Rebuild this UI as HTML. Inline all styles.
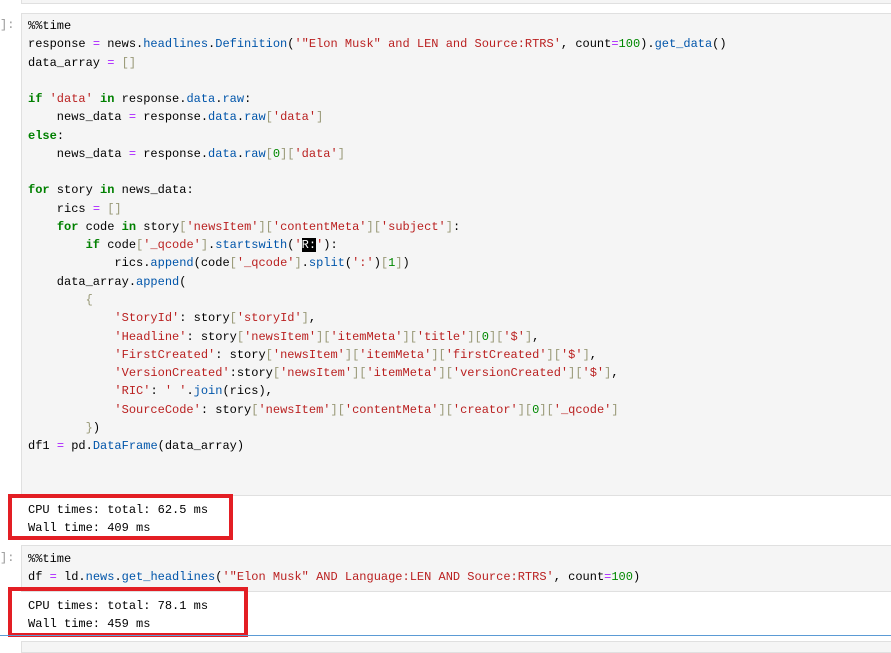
<!DOCTYPE html>
<html><head><meta charset="utf-8"><style>
body{margin:0;width:891px;height:647px;background:#fff;position:relative;overflow:hidden;font-family:"Liberation Mono",monospace;font-size:12px;color:#000}
.box{position:absolute;left:21px;right:-2px;background:#f5f5f5;border:1px solid #e0e0e0;box-sizing:border-box}
pre{margin:0;position:absolute;left:28px;font-family:"Liberation Mono",monospace;font-size:12px;line-height:18.26px;white-space:pre}
.k{color:#008000;font-weight:bold}.s{color:#ba2121}.o{color:#aa22ff}.p{color:#0055aa}.b{color:#999977}.n{color:#008800}
.sel{background:#000;color:#fff}
.pr{position:absolute;left:0;color:#999;font-size:12px}
.red{position:absolute;border:4px solid #e31e24;box-sizing:border-box}
</style></head><body>
<div class="box" style="top:-2px;height:6px"></div>
<div class="box" style="top:13px;height:483px"></div>
<div class="pr" style="top:18px">]:</div>
<pre style="top:17px">%%time
response <span class="o">=</span> news.<span class="p">headlines</span>.<span class="p">Definition</span>(<span class="s">'"Elon Musk" and LEN and Source:RTRS'</span>, count<span class="o">=</span><span class="n">100</span>).<span class="p">get_data</span>()
data_array <span class="o">=</span> <span class="b">[]</span>

<span class="k">if</span> <span class="s">'data'</span> <span class="k">in</span> response.<span class="p">data</span>.<span class="p">raw</span>:
    news_data <span class="o">=</span> response.<span class="p">data</span>.<span class="p">raw</span><span class="b">[</span><span class="s">'data'</span><span class="b">]</span>
<span class="k">else</span>:
    news_data <span class="o">=</span> response.<span class="p">data</span>.<span class="p">raw</span><span class="b">[</span><span class="n">0</span><span class="b">][</span><span class="s">'data'</span><span class="b">]</span>

<span class="k">for</span> story <span class="k">in</span> news_data:
    rics <span class="o">=</span> <span class="b">[]</span>
    <span class="k">for</span> code <span class="k">in</span> story<span class="b">[</span><span class="s">'newsItem'</span><span class="b">][</span><span class="s">'contentMeta'</span><span class="b">][</span><span class="s">'subject'</span><span class="b">]</span>:
        <span class="k">if</span> code<span class="b">[</span><span class="s">'_qcode'</span><span class="b">]</span>.<span class="p">startswith</span>(<span class="s">'<span class="sel">R:</span>'</span>):
            rics.<span class="p">append</span>(code<span class="b">[</span><span class="s">'_qcode'</span><span class="b">]</span>.<span class="p">split</span>(<span class="s">':'</span>)<span class="b">[</span><span class="n">1</span><span class="b">]</span>)
    data_array.<span class="p">append</span>(
        <span class="b">{</span>
            <span class="s">'StoryId'</span>: story<span class="b">[</span><span class="s">'storyId'</span><span class="b">]</span>,
            <span class="s">'Headline'</span>: story<span class="b">[</span><span class="s">'newsItem'</span><span class="b">][</span><span class="s">'itemMeta'</span><span class="b">][</span><span class="s">'title'</span><span class="b">][</span><span class="n">0</span><span class="b">][</span><span class="s">'$'</span><span class="b">]</span>,
            <span class="s">'FirstCreated'</span>: story<span class="b">[</span><span class="s">'newsItem'</span><span class="b">][</span><span class="s">'itemMeta'</span><span class="b">][</span><span class="s">'firstCreated'</span><span class="b">][</span><span class="s">'$'</span><span class="b">]</span>,
            <span class="s">'VersionCreated'</span>:story<span class="b">[</span><span class="s">'newsItem'</span><span class="b">][</span><span class="s">'itemMeta'</span><span class="b">][</span><span class="s">'versionCreated'</span><span class="b">][</span><span class="s">'$'</span><span class="b">]</span>,
            <span class="s">'RIC'</span>: <span class="s">' '</span>.<span class="p">join</span>(rics),
            <span class="s">'SourceCode'</span>: story<span class="b">[</span><span class="s">'newsItem'</span><span class="b">][</span><span class="s">'contentMeta'</span><span class="b">][</span><span class="s">'creator'</span><span class="b">][</span><span class="n">0</span><span class="b">][</span><span class="s">'_qcode'</span><span class="b">]</span>
        <span class="b">}</span>)
df1 <span class="o">=</span> pd.<span class="p">DataFrame</span>(data_array)</pre>
<pre style="top:501px">CPU times: total: 62.5 ms
Wall time: 409 ms</pre>
<div class="red" style="left:8px;top:494px;width:225px;height:46px"></div>
<div class="box" style="top:545px;height:47px"></div>
<div class="pr" style="top:551px">]:</div>
<pre style="top:550px">%%time
df <span class="o">=</span> ld.<span class="p">news</span>.<span class="p">get_headlines</span>(<span class="s">'"Elon Musk" AND Language:LEN AND Source:RTRS'</span>, count<span class="o">=</span><span class="n">100</span>)</pre>
<pre style="top:597px">CPU times: total: 78.1 ms
Wall time: 459 ms</pre>
<div class="red" style="left:8px;top:587px;width:240px;height:50px"></div>
<div style="position:absolute;left:0;right:0;top:635px;height:1px;background:#5b9bd5"></div>
<div class="box" style="top:641px;height:12px"></div>
</body></html>
